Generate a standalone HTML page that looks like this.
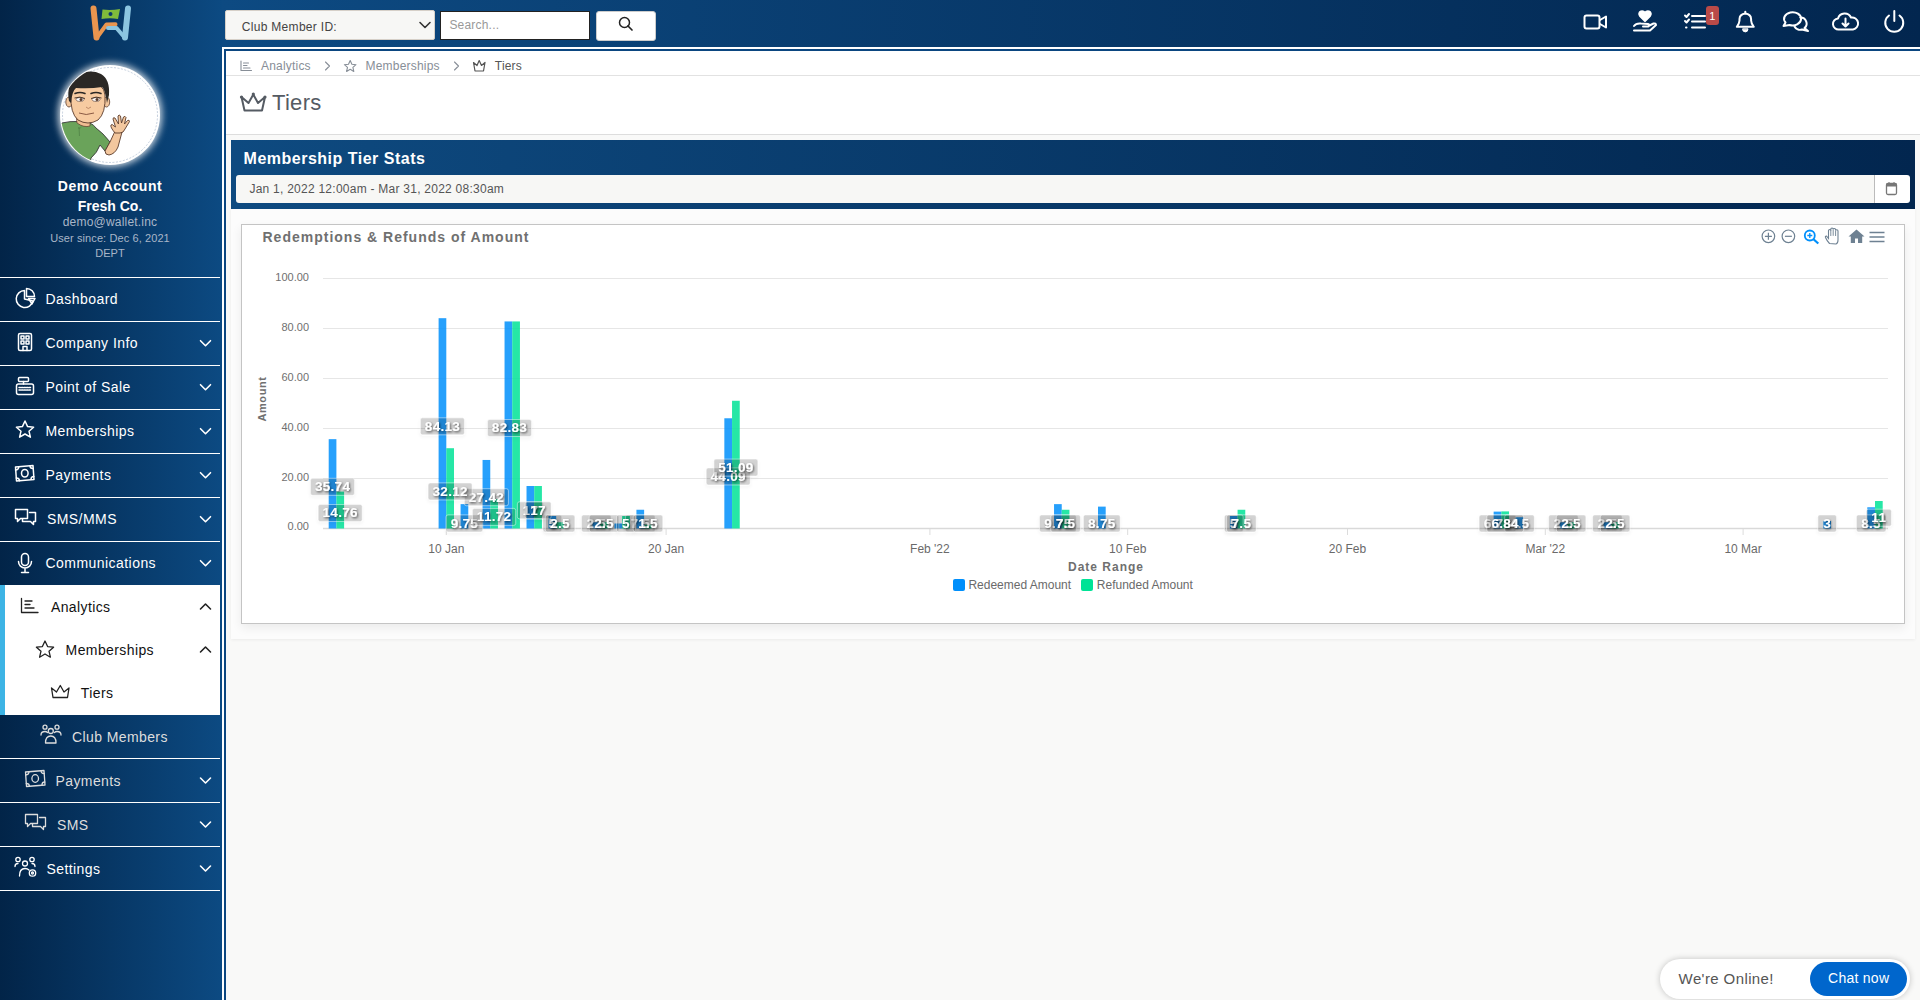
<!DOCTYPE html><html><head><meta charset="utf-8"><style>
*{margin:0;padding:0;box-sizing:border-box}
html,body{width:1920px;height:1000px;overflow:hidden}
body{background:#f9f9f8;font-family:"Liberation Sans", sans-serif;position:relative}
.t{position:absolute;white-space:nowrap}
.a{position:absolute}
svg{position:absolute;overflow:visible}
</style></head><body>
<div class="a" style="left:0;top:0;width:222px;height:1000px;background:linear-gradient(to right,#022448,#0c4a82)"></div><div class="a" style="left:222px;top:0;width:1698px;height:47px;background:linear-gradient(to right,#0d4a82,#02264f)"></div><div class="a" style="left:222px;top:47px;width:1698px;height:2px;background:#fff"></div><div class="a" style="left:222px;top:47px;width:2px;height:953px;background:#fff"></div><div class="a" style="left:224px;top:49px;width:1696px;height:2px;background:#0b4680"></div><div class="a" style="left:224px;top:49px;width:2px;height:951px;background:#0b4680"></div><svg style="left:0;top:0" width="222" height="50" viewBox="0 0 222 50">
<path d="M115.5 24.2 L106.5 24.5 L97 37.5" fill="none" stroke="#e9954f" stroke-width="4" stroke-linecap="round" stroke-linejoin="round"/>
<path d="M93.5 8.5 L96.5 37.5" fill="none" stroke="#e9954f" stroke-width="6" stroke-linecap="round"/>
<path d="M108 28 L116.5 28 L125 38" fill="none" stroke="#8cc5e0" stroke-width="4" stroke-linecap="round" stroke-linejoin="round"/>
<path d="M128 8.5 L125 37.5" fill="none" stroke="#8cc5e0" stroke-width="6" stroke-linecap="round"/>
<path d="M102.5 9.5 Q111 10.5 120 9 L118 19 Q110 17.5 101.5 19 Z" fill="#7fbb3b"/>
<circle cx="110.5" cy="14" r="2" fill="#0b3a6b"/>
</svg><div class="a" style="left:60px;top:65px;width:100px;height:100px;border-radius:50%;background:#fff;box-shadow:0 0 7px 2px rgba(255,255,255,.8)"></div>
<svg style="left:60px;top:65px" width="100" height="100" viewBox="0 0 100 100">
<defs><clipPath id="av"><circle cx="50" cy="50" r="49"/></clipPath></defs>
<circle cx="50" cy="50" r="47.5" fill="none" stroke="#9fb0c8" stroke-width=".6" stroke-dasharray="2 1.5"/>
<g clip-path="url(#av)">
<path d="M2 58 Q10 56 18 56.5 L30 58 Q34 60 36 63 Q43 68 50 77 L45 86 L40 80 Q37 88 31 93 L28 110 L0 110 L0 60 Z" fill="#6aa35a" stroke="#3a3a3a" stroke-width=".9" stroke-linejoin="round"/>
<path d="M19 62 L19.5 71 M18 63 Q20 64 21.5 62" stroke="#4f7f45" stroke-width=".7" fill="none"/>
<path d="M45 86 Q45 90 49 90 Q55 89 58 82 L62 67 L56 64 L50 77 Z" fill="#f3c79e" stroke="#5a3b2b" stroke-width=".9" stroke-linejoin="round"/>
<path d="M55 68 Q50 62 51 60 Q52 58.5 54 61 L55.5 62 L53 54 Q53 52 55 53 L58.5 59 L58 51 Q59 49 60.5 51 L61.5 58 L63.5 52 Q65 50.5 66 52.5 L64.5 59 L67.5 55.5 Q69.5 54.5 69.5 56.5 L65 64 Q63.5 68 60 68 Z" fill="#f3c79e" stroke="#5a3b2b" stroke-width=".9" stroke-linejoin="round"/>
<path d="M16 50 Q19 54 23 55 L30 55 L30 61 Q24 63 17 58 Z" fill="#f0bd92" stroke="#5a3b2b" stroke-width=".7"/>
<ellipse cx="9" cy="37" rx="3.2" ry="5" fill="#f3c79e" stroke="#5a3b2b" stroke-width=".8"/>
<ellipse cx="46.5" cy="37" rx="3.2" ry="5" fill="#f3c79e" stroke="#5a3b2b" stroke-width=".8"/>
<path d="M11 30 Q10 48 18 55 Q28 61 38 55 Q46 48 45 30 Q44 18 28 17 Q12 18 11 30 Z" fill="#f7cba1" stroke="#5a3b2b" stroke-width=".9"/>
<path d="M9 36 Q6 20 16 12 Q28 3 41 9 Q50 14 49 30 L47 38 Q45 24 42 22 Q30 24 16 23 Q12 26 11 38 Z" fill="#2b2825"/>
<path d="M15 28.5 Q20 26.5 25 28.5 M31 28.5 Q36 26.5 41 28.5" stroke="#2b2825" stroke-width="1.6" fill="none" stroke-linecap="round"/>
<ellipse cx="20" cy="34.5" rx="4" ry="2" fill="#fff" stroke="#5a3b2b" stroke-width=".6"/>
<ellipse cx="36" cy="34.5" rx="4" ry="2" fill="#fff" stroke="#5a3b2b" stroke-width=".6"/>
<circle cx="21" cy="34.5" r="1.5" fill="#5a3b2b"/><circle cx="37" cy="34.5" r="1.5" fill="#5a3b2b"/>
<path d="M14.5 33 Q20 31 25 33.5 M31 33.5 Q36 31 41.5 33" stroke="#3a2b22" stroke-width=".9" fill="none"/>
<path d="M26 42 Q28 45 31 42" stroke="#b07a5a" stroke-width=".8" fill="none"/>
<path d="M19 48 Q26 51 34 48" stroke="#8a5a44" stroke-width="1" fill="none"/>
</g></svg><div class="t" style="left:-290.0px;width:800px;text-align:center;top:178.6px;font-size:14px;line-height:14px;color:#fff;font-weight:bold;letter-spacing:0.5px;">Demo Account</div>
<div class="t" style="left:-290.0px;width:800px;text-align:center;top:198.7px;font-size:14px;line-height:14px;color:#fff;font-weight:bold;letter-spacing:0px;">Fresh Co.</div>
<div class="t" style="left:-290.0px;width:800px;text-align:center;top:216.1px;font-size:12px;line-height:12px;color:#a9b6c8;font-weight:normal;letter-spacing:0.2px;">demo@wallet.inc</div>
<div class="t" style="left:-290.0px;width:800px;text-align:center;top:233.3px;font-size:11px;line-height:11px;color:#a9b6c8;font-weight:normal;letter-spacing:0.1px;">User since: Dec 6, 2021</div>
<div class="t" style="left:-290.0px;width:800px;text-align:center;top:248.4px;font-size:11px;line-height:11px;color:#a9b6c8;font-weight:normal;letter-spacing:0px;">DEPT</div>
<div class="a" style="left:0;top:277px;width:220px;height:1.2px;background:#fff"></div><div class="a" style="left:0;top:321px;width:220px;height:1.2px;background:#fff"></div><div class="a" style="left:0;top:365px;width:220px;height:1.2px;background:#fff"></div><div class="a" style="left:0;top:409px;width:220px;height:1.2px;background:#fff"></div><div class="a" style="left:0;top:453px;width:220px;height:1.2px;background:#fff"></div><div class="a" style="left:0;top:497px;width:220px;height:1.2px;background:#fff"></div><div class="a" style="left:0;top:541px;width:220px;height:1.2px;background:#fff"></div><div class="a" style="left:0;top:758px;width:220px;height:1.2px;background:#fff"></div><div class="a" style="left:0;top:802px;width:220px;height:1.2px;background:#fff"></div><div class="a" style="left:0;top:846px;width:220px;height:1.2px;background:#fff"></div><div class="a" style="left:0;top:890px;width:220px;height:1.2px;background:#fff"></div><div class="a" style="left:0;top:585px;width:220px;height:130px;background:#fff"></div><div class="a" style="left:0;top:585px;width:5px;height:130px;background:#3db4e5"></div><div class="t" style="left:45.5px;top:292.3px;font-size:14px;line-height:14px;color:#fff;font-weight:normal;letter-spacing:0.45px;">Dashboard</div>
<div class="t" style="left:45.5px;top:336.3px;font-size:14px;line-height:14px;color:#fff;font-weight:normal;letter-spacing:0.45px;">Company Info</div>
<svg style="left:0;top:0" width="1" height="1"><path d="M200.5 340.7 L205.5 345.7 L210.5 340.7" stroke="#fff" stroke-width="1.6" fill="none" stroke-linecap="round" stroke-linejoin="round"/></svg><div class="t" style="left:45.5px;top:380.3px;font-size:14px;line-height:14px;color:#fff;font-weight:normal;letter-spacing:0.45px;">Point of Sale</div>
<svg style="left:0;top:0" width="1" height="1"><path d="M200.5 384.7 L205.5 389.7 L210.5 384.7" stroke="#fff" stroke-width="1.6" fill="none" stroke-linecap="round" stroke-linejoin="round"/></svg><div class="t" style="left:45.5px;top:424.3px;font-size:14px;line-height:14px;color:#fff;font-weight:normal;letter-spacing:0.45px;">Memberships</div>
<svg style="left:0;top:0" width="1" height="1"><path d="M200.5 428.7 L205.5 433.7 L210.5 428.7" stroke="#fff" stroke-width="1.6" fill="none" stroke-linecap="round" stroke-linejoin="round"/></svg><div class="t" style="left:45.5px;top:468.3px;font-size:14px;line-height:14px;color:#fff;font-weight:normal;letter-spacing:0.45px;">Payments</div>
<svg style="left:0;top:0" width="1" height="1"><path d="M200.5 472.7 L205.5 477.7 L210.5 472.7" stroke="#fff" stroke-width="1.6" fill="none" stroke-linecap="round" stroke-linejoin="round"/></svg><div class="t" style="left:46.9px;top:512.3px;font-size:14px;line-height:14px;color:#fff;font-weight:normal;letter-spacing:0.45px;">SMS/MMS</div>
<svg style="left:0;top:0" width="1" height="1"><path d="M200.5 516.7 L205.5 521.7 L210.5 516.7" stroke="#fff" stroke-width="1.6" fill="none" stroke-linecap="round" stroke-linejoin="round"/></svg><div class="t" style="left:45.5px;top:556.3px;font-size:14px;line-height:14px;color:#fff;font-weight:normal;letter-spacing:0.45px;">Communications</div>
<svg style="left:0;top:0" width="1" height="1"><path d="M200.5 560.7 L205.5 565.7 L210.5 560.7" stroke="#fff" stroke-width="1.6" fill="none" stroke-linecap="round" stroke-linejoin="round"/></svg><svg style="left:0;top:0" width="222" height="1000" viewBox="0 0 222 1000">
<g fill="none" stroke="#fff" stroke-width="1.5" stroke-linecap="round" stroke-linejoin="round">
<!-- dashboard pie -->
<path d="M24.5 290.5 A8.5 8.5 0 1 0 33 301 L24.5 299 Z"/>
<path d="M26.5 288.5 A8 8 0 0 1 34.5 296.5 L26.5 296.5 Z"/>
<path d="M28.5 298.5 L35 298.5 L32 304 Z"/>
<!-- company building -->
<rect x="18.5" y="333.5" width="13" height="17" rx="1.5"/>
<rect x="21" y="336" width="3" height="3"/><rect x="26" y="336" width="3" height="3"/>
<rect x="21" y="341" width="3" height="3"/><rect x="26" y="341" width="3" height="3"/>
<path d="M23 350.5 L23 346.5 L27 346.5 L27 350.5"/>
<!-- POS register -->
<rect x="18.5" y="377.5" width="10" height="4" rx="1"/>
<path d="M23.5 381.5 L23.5 384"/>
<rect x="16.5" y="384" width="17" height="10.5" rx="2"/>
<path d="M19 387.5 h12 M19 390 h12" stroke-dasharray="1.5 1"/>
<!-- star -->
<path d="M25 421 L27.6 426.6 L33.6 427.2 L29 431.2 L30.4 437.2 L25 434 L19.6 437.2 L21 431.2 L16.4 427.2 L22.4 426.6 Z"/>
<!-- payments bill -->
<path d="M15.5 467 L33 465.5 L34 479.5 L16.5 481 Z"/>
<ellipse cx="24.8" cy="473.2" rx="3.3" ry="3.8"/>
<path d="M15.5 470 Q18.5 470 18.8 467 M33.2 468.5 Q30.2 468.7 30 466 M16.3 478 Q19.3 478 19.5 480.8 M33.8 476.5 Q31 476.5 31 479.3"/>
<!-- sms bubbles -->
<path d="M15.5 509.5 h12 v9 h-7 l-3 3 v-3 h-2 Z"/>
<path d="M29.5 512.5 h6 v9 h-2 v3 l-3 -3 h-8 v-2.5"/>
<!-- mic -->
<rect x="21.5" y="553.5" width="7" height="12" rx="3.5"/>
<path d="M18.5 561.5 A6.5 6.5 0 0 0 31.5 561.5 M25 568 L25 572.5 M21.5 572.5 h7"/>
</g>
<g fill="none" stroke="#222" stroke-width="1.3" stroke-linecap="round" stroke-linejoin="round">
<!-- analytics -->
<path d="M21.5 598.5 L21.5 612.5 L38 612.5 M25 601 h7 M25 604.5 h5 M25 608 h9"/>
<!-- star -->
<path d="M45 641 L47.6 646.6 L53.6 647.2 L49 651.2 L50.4 657.2 L45 654 L39.6 657.2 L41 651.2 L36.4 647.2 L42.4 646.6 Z"/>
<!-- crown -->
<path d="M53 697.5 L51.5 688 L56.5 692 L60.3 685.5 L64 692 L69 688 L67.5 697.5 Z"/>
</g>
<g fill="none" stroke="#ddd" stroke-width="1.3" stroke-linecap="round" stroke-linejoin="round">
<!-- club members -->
<circle cx="50.8" cy="731" r="2.5"/><circle cx="45" cy="727.2" r="2"/><circle cx="57" cy="727.2" r="2"/>
<path d="M45.5 743 Q45.5 736 50.8 736 Q56 736 56 743 Z M41 735 Q41 731.5 45 731.5 Q46.5 731.5 47.5 732.5 M61 735 Q61 731.5 57 731.5 Q55.5 731.5 54.5 732.5"/>
<!-- payments bill -->
<path d="M25.5 772 L44 770.5 L45 785 L26.5 786.5 Z"/>
<ellipse cx="35.2" cy="778.5" rx="3.3" ry="3.8"/>
<path d="M25.7 775 Q28.7 775 29 772 M44.2 773.5 Q41.2 773.7 41 771 M26.3 783.5 Q29.3 783.5 29.5 786.3 M44.8 782 Q42 782 42 784.8"/>
<!-- sms bubbles -->
<path d="M25.5 814.5 h12 v9 h-7 l-3 3 v-3 h-2 Z"/>
<path d="M39.5 817.5 h6 v9 h-2 v3 l-3 -3 h-8 v-2.5"/>
</g>
<g fill="none" stroke="#fff" stroke-width="1.3" stroke-linecap="round" stroke-linejoin="round">
<!-- settings users gear -->
<circle cx="18" cy="859.5" r="2.2"/><circle cx="32" cy="859.5" r="2.2"/><circle cx="25" cy="863.5" r="2.5"/>
<path d="M15 866.5 Q15 863.5 18 863.5 M35 866.5 Q35 863.5 32 863.5 M19.5 876 Q19.5 868.5 25 868.5 Q27.5 868.5 29 870"/>
<circle cx="32.5" cy="873" r="3.2"/><circle cx="32.5" cy="873" r="1"/>
</g>
</svg><div class="t" style="left:50.9px;top:600.0px;font-size:14px;line-height:14px;color:#111;font-weight:normal;letter-spacing:0.4px;">Analytics</div>
<svg style="left:0;top:0" width="1" height="1"><path d="M200.5 609 L205.5 604 L210.5 609" stroke="#222" stroke-width="1.6" fill="none" stroke-linecap="round" stroke-linejoin="round"/></svg><div class="t" style="left:65.6px;top:642.9px;font-size:14px;line-height:14px;color:#111;font-weight:normal;letter-spacing:0.4px;">Memberships</div>
<svg style="left:0;top:0" width="1" height="1"><path d="M200.5 652 L205.5 647 L210.5 652" stroke="#222" stroke-width="1.6" fill="none" stroke-linecap="round" stroke-linejoin="round"/></svg><div class="t" style="left:80.8px;top:685.8px;font-size:14px;line-height:14px;color:#111;font-weight:normal;letter-spacing:0.4px;">Tiers</div>
<div class="t" style="left:72.0px;top:729.5px;font-size:14px;line-height:14px;color:#ddd;font-weight:normal;letter-spacing:0.4px;">Club Members</div>
<div class="t" style="left:55.5px;top:773.6px;font-size:14px;line-height:14px;color:#ddd;font-weight:normal;letter-spacing:0.4px;">Payments</div>
<svg style="left:0;top:0" width="1" height="1"><path d="M200.5 778 L205.5 783 L210.5 778" stroke="#fff" stroke-width="1.6" fill="none" stroke-linecap="round" stroke-linejoin="round"/></svg><div class="t" style="left:57.0px;top:817.5px;font-size:14px;line-height:14px;color:#ddd;font-weight:normal;letter-spacing:0.4px;">SMS</div>
<svg style="left:0;top:0" width="1" height="1"><path d="M200.5 822 L205.5 827 L210.5 822" stroke="#fff" stroke-width="1.6" fill="none" stroke-linecap="round" stroke-linejoin="round"/></svg><div class="t" style="left:46.6px;top:861.6px;font-size:14px;line-height:14px;color:#fff;font-weight:normal;letter-spacing:0.4px;">Settings</div>
<svg style="left:0;top:0" width="1" height="1"><path d="M200.5 866 L205.5 871 L210.5 866" stroke="#fff" stroke-width="1.6" fill="none" stroke-linecap="round" stroke-linejoin="round"/></svg><div class="a" style="left:225px;top:10px;width:210px;height:29.5px;background:#f7f7f5;border:1px solid #d6d0c8;border-radius:2px"></div><div class="t" style="left:241.8px;top:20.7px;font-size:12px;line-height:12px;color:#444;font-weight:normal;letter-spacing:0.3px;">Club Member ID:</div>
<svg style="left:0;top:0" width="1" height="1"><path d="M420 22.5 L425 27.5 L430 22.5" stroke="#333" stroke-width="1.6" fill="none" stroke-linecap="round" stroke-linejoin="round"/></svg><div class="a" style="left:440px;top:10.5px;width:150px;height:29.5px;background:#fff;border:1px solid #222"></div><div class="t" style="left:449.4px;top:19.2px;font-size:12px;line-height:12px;color:#999;font-weight:normal;letter-spacing:0.2px;">Search...</div>
<div class="a" style="left:596px;top:10.5px;width:60px;height:30px;background:#fff;border:1px solid #ccc;border-radius:3px"></div><svg style="left:0;top:0" width="1" height="1"><circle cx="624.5" cy="22.5" r="5" fill="none" stroke="#222" stroke-width="1.5"/><path d="M628 26 L632 30" stroke="#222" stroke-width="1.7" stroke-linecap="round"/></svg><svg style="left:0;top:0" width="1" height="1"><g fill="none" stroke="#fff" stroke-width="2" stroke-linecap="round" stroke-linejoin="round">
<rect x="1584.5" y="15.5" width="15" height="13" rx="2"/><path d="M1600 20 L1606 16.5 L1606 27.5 L1600 24"/>
<path d="M1645 21 L1640 16 Q1638 13 1641 11.5 Q1643.5 10.8 1645 13 Q1646.5 10.8 1649 11.5 Q1652 13 1650 16 Z" fill="#fff"/>
<path d="M1634 26 Q1636 23 1641 23.5 L1648 24 Q1650 24.5 1648.5 26.5 L1643 26.5 M1648.5 26 L1653.5 23.5 Q1656 23 1656 25 L1650 30.5 L1634 30.5"/>
<path d="M1685 15.5 L1686.5 17 L1689 14 M1685 21 L1686.5 22.5 L1689 19.5 M1692 16 L1705 16 M1692 21.5 L1705 21.5 M1692 27.5 L1705 27.5 M1686 27.5 L1686.5 27.5"/>
<path d="M1736.8 26.8 L1753.8 26.8 Q1751.3 24 1751.1 20.5 L1751.1 19 Q1750.9 14.3 1745.3 13.6 Q1739.7 14.3 1739.5 19 L1739.5 20.5 Q1739.3 24 1736.8 26.8 Z"/><path d="M1745.3 11.8 L1745.3 13"/><path d="M1742.6 29.2 A2.7 2.7 0 0 0 1748 29.2 Z" fill="#fff" stroke-width="1"/>
<path d="M1789.5 25 A8.5 6.6 0 1 0 1785.5 22.5 L1783.5 26 Z"/>
<path d="M1800.2 17.5 A6.2 6 0 0 1 1804.5 28 L1808 31 L1802 29.5 A6.2 6 0 0 1 1794.5 26.5"/>
<path d="M1839 29.5 A5.5 5.5 0 0 1 1838 18.5 A7 7 0 0 1 1851 17.5 A5.5 5.5 0 0 1 1853 29.5 Z"/><path d="M1845.5 18.5 L1845.5 26.5 M1842.5 23.5 L1845.5 26.5 L1848.5 23.5"/>
<path d="M1889 15.5 A9 9 0 1 0 1899.5 15.5"/><path d="M1894.3 11 L1894.3 21"/>
</g></svg><div class="a" style="left:1705.5px;top:5.5px;width:13.5px;height:19.5px;background:#b94a48;border-radius:3px"></div><div class="t" style="left:1312.2px;width:800px;text-align:center;top:10.7px;font-size:11px;line-height:11px;color:#fff;font-weight:normal;letter-spacing:0px;">1</div>
<div class="a" style="left:226px;top:51px;width:1694px;height:84px;background:#fff;border-bottom:1px solid #ddd"></div><div class="a" style="left:226px;top:75px;width:1694px;height:1px;background:#e2e2e2"></div><svg style="left:0;top:0" width="1" height="1"><g fill="none" stroke="#878e97" stroke-width="1.1" stroke-linecap="round" stroke-linejoin="round">
<path d="M241 61 L241 70.5 L251.5 70.5 M243.5 63 h5 M243.5 65.5 h3.5 M243.5 68 h6.5"/>
<path d="M350.2 60.5 L351.9 64.3 L356 64.7 L352.9 67.4 L353.8 71.4 L350.2 69.3 L346.6 71.4 L347.5 67.4 L344.4 64.7 L348.5 64.3 Z"/>
<path d="M325.5 62 L329.5 66 L325.5 70 M454.5 62 L458.5 66 L454.5 70"/>
</g><g fill="none" stroke="#555" stroke-width="1.2" stroke-linejoin="round">
<path d="M475 71 L473.5 62.5 L477 65.5 L479.2 60.5 L481.5 65.5 L485 62.5 L483.5 71 Z"/>
</g></svg><div class="t" style="left:261.0px;top:60.1px;font-size:12px;line-height:12px;color:#878e97;font-weight:normal;letter-spacing:0.2px;">Analytics</div>
<div class="t" style="left:365.5px;top:60.1px;font-size:12px;line-height:12px;color:#878e97;font-weight:normal;letter-spacing:0.2px;">Memberships</div>
<div class="t" style="left:494.8px;top:60.1px;font-size:12px;line-height:12px;color:#555;font-weight:normal;letter-spacing:0.2px;">Tiers</div>
<svg style="left:0;top:0" width="1" height="1"><g fill="none" stroke="#555b63" stroke-width="2" stroke-linejoin="round">
<path d="M244.5 110.5 L241.5 97 L248.5 103 L253.3 94.5 L258 103 L265 97 L262 110.5 Z"/>
</g><g fill="#555b63"><circle cx="241.5" cy="97" r="1.6"/><circle cx="253.3" cy="94" r="1.6"/><circle cx="265" cy="97" r="1.6"/></g></svg><div class="t" style="left:272.0px;top:92.4px;font-size:22px;line-height:22px;color:#555b63;font-weight:normal;letter-spacing:0.3px;">Tiers</div>
<div class="a" style="left:231px;top:208px;width:1684px;height:431px;background:#fcfcfc;box-shadow:0 1px 3px rgba(0,0,0,.06)"></div><div class="a" style="left:231px;top:140px;width:1684px;height:68.5px;background:linear-gradient(to right,#0e4a80,#02264f)"></div><div class="t" style="left:243.6px;top:150.5px;font-size:16px;line-height:16px;color:#fff;font-weight:bold;letter-spacing:0.5px;">Membership Tier Stats</div>
<div class="a" style="left:236px;top:174.5px;width:1638px;height:28.5px;background:#f7f7f5;border-radius:3px 0 0 3px"></div><div class="a" style="left:1873.5px;top:174.5px;width:36px;height:28.5px;background:#fff;border-left:1px solid #bbb;border-radius:0 3px 3px 0"></div><svg style="left:0;top:0" width="1" height="1"><rect x="1886.5" y="183.5" width="10" height="11" rx="1.5" fill="#fff" stroke="#777" stroke-width="1.3"/><rect x="1886.5" y="183.5" width="10" height="3" fill="#777"/><path d="M1889 182 v2.5 M1894 182 v2.5" stroke="#777" stroke-width="1"/></svg><div class="t" style="left:249.4px;top:182.8px;font-size:12px;line-height:12px;color:#555;font-weight:normal;letter-spacing:0.25px;">Jan 1, 2022 12:00am - Mar 31, 2022 08:30am</div>
<div class="a" style="left:241px;top:224px;width:1664px;height:400px;background:#fff;border:1px solid #c4c4c4;box-shadow:0 4px 10px rgba(0,0,0,.07)"></div><svg style="left:0;top:0" width="1920" height="1000" viewBox="0 0 1920 1000"><defs><filter id="ds" x="-20%" y="-20%" width="140%" height="140%"><feDropShadow dx="1" dy="1.2" stdDeviation="0.8" flood-color="#000" flood-opacity="0.6"/></filter><filter id="bs" x="-30%" y="-30%" width="160%" height="180%"><feDropShadow dx="0" dy="2" stdDeviation="1.5" flood-color="#000" flood-opacity="0.12"/></filter></defs><text x="262.5" y="242" font-family="Liberation Sans" font-weight="bold" font-size="14" letter-spacing="1" fill="#707070">Redemptions &amp; Refunds of Amount</text><line x1="323" y1="278.5" x2="1888" y2="278.5" stroke="#e6e6e6" stroke-width="1"/><line x1="323" y1="328.5" x2="1888" y2="328.5" stroke="#e6e6e6" stroke-width="1"/><line x1="323" y1="378.5" x2="1888" y2="378.5" stroke="#e6e6e6" stroke-width="1"/><line x1="323" y1="428.5" x2="1888" y2="428.5" stroke="#e6e6e6" stroke-width="1"/><line x1="323" y1="478.5" x2="1888" y2="478.5" stroke="#e6e6e6" stroke-width="1"/><line x1="323" y1="528.5" x2="1888" y2="528.5" stroke="#d9d9d9" stroke-width="1.5"/><text x="309" y="281" text-anchor="end" font-family="Liberation Sans" font-size="11" fill="#6f6f6f">100.00</text><text x="309" y="330.5" text-anchor="end" font-family="Liberation Sans" font-size="11" fill="#6f6f6f">80.00</text><text x="309" y="380.5" text-anchor="end" font-family="Liberation Sans" font-size="11" fill="#6f6f6f">60.00</text><text x="309" y="430.5" text-anchor="end" font-family="Liberation Sans" font-size="11" fill="#6f6f6f">40.00</text><text x="309" y="480.5" text-anchor="end" font-family="Liberation Sans" font-size="11" fill="#6f6f6f">20.00</text><text x="309" y="530" text-anchor="end" font-family="Liberation Sans" font-size="11" fill="#6f6f6f">0.00</text><text transform="translate(266 399) rotate(-90)" text-anchor="middle" font-family="Liberation Sans" font-weight="bold" font-size="11" letter-spacing="0.6" fill="#707070">Amount</text><line x1="446.3" y1="529" x2="446.3" y2="535" stroke="#dcdcdc" stroke-width="1"/><text x="446.3" y="553" text-anchor="middle" font-family="Liberation Sans" font-size="12" fill="#6a6a6a">10 Jan</text><line x1="666.1" y1="529" x2="666.1" y2="535" stroke="#dcdcdc" stroke-width="1"/><text x="666.1" y="553" text-anchor="middle" font-family="Liberation Sans" font-size="12" fill="#6a6a6a">20 Jan</text><line x1="929.9" y1="529" x2="929.9" y2="535" stroke="#dcdcdc" stroke-width="1"/><text x="929.9" y="553" text-anchor="middle" font-family="Liberation Sans" font-size="12" fill="#6a6a6a">Feb '22</text><line x1="1127.7" y1="529" x2="1127.7" y2="535" stroke="#dcdcdc" stroke-width="1"/><text x="1127.7" y="553" text-anchor="middle" font-family="Liberation Sans" font-size="12" fill="#6a6a6a">10 Feb</text><line x1="1347.5" y1="529" x2="1347.5" y2="535" stroke="#dcdcdc" stroke-width="1"/><text x="1347.5" y="553" text-anchor="middle" font-family="Liberation Sans" font-size="12" fill="#6a6a6a">20 Feb</text><line x1="1545.3" y1="529" x2="1545.3" y2="535" stroke="#dcdcdc" stroke-width="1"/><text x="1545.3" y="553" text-anchor="middle" font-family="Liberation Sans" font-size="12" fill="#6a6a6a">Mar '22</text><line x1="1743.1" y1="529" x2="1743.1" y2="535" stroke="#dcdcdc" stroke-width="1"/><text x="1743.1" y="553" text-anchor="middle" font-family="Liberation Sans" font-size="12" fill="#6a6a6a">10 Mar</text><text x="1106" y="571" text-anchor="middle" font-family="Liberation Sans" font-weight="bold" font-size="12" letter-spacing="1" fill="#6f6f6f">Date Range</text><rect x="953" y="579" width="12" height="12" rx="2" fill="#008ffb"/><text x="968.4" y="588.7" font-family="Liberation Sans" font-size="12" fill="#6a6a6a">Redeemed Amount</text><rect x="1081" y="579" width="12" height="12" rx="2" fill="#00e396"/><text x="1096.8" y="588.7" font-family="Liberation Sans" font-size="12" fill="#6a6a6a">Refunded Amount</text><rect x="328.70" y="439.15" width="7.7" height="89.35" fill="#008ffb" fill-opacity="0.85"/><rect x="438.60" y="318.18" width="7.7" height="210.32" fill="#008ffb" fill-opacity="0.85"/><rect x="460.58" y="504.12" width="7.7" height="24.38" fill="#008ffb" fill-opacity="0.85"/><rect x="482.56" y="459.95" width="7.7" height="68.55" fill="#008ffb" fill-opacity="0.85"/><rect x="504.54" y="321.43" width="7.7" height="207.07" fill="#008ffb" fill-opacity="0.85"/><rect x="526.52" y="486.00" width="7.7" height="42.50" fill="#008ffb" fill-opacity="0.85"/><rect x="548.50" y="516.00" width="7.7" height="12.50" fill="#008ffb" fill-opacity="0.85"/><rect x="592.46" y="522.25" width="7.7" height="6.25" fill="#008ffb" fill-opacity="0.85"/><rect x="614.44" y="523.50" width="7.7" height="5.00" fill="#008ffb" fill-opacity="0.85"/><rect x="636.42" y="509.75" width="7.7" height="18.75" fill="#008ffb" fill-opacity="0.85"/><rect x="724.34" y="418.27" width="7.7" height="110.23" fill="#008ffb" fill-opacity="0.85"/><rect x="1054.04" y="504.12" width="7.7" height="24.38" fill="#008ffb" fill-opacity="0.85"/><rect x="1098.00" y="506.62" width="7.7" height="21.88" fill="#008ffb" fill-opacity="0.85"/><rect x="1229.88" y="516.00" width="7.7" height="12.50" fill="#008ffb" fill-opacity="0.85"/><rect x="1493.64" y="511.62" width="7.7" height="16.88" fill="#008ffb" fill-opacity="0.85"/><rect x="1515.62" y="517.25" width="7.7" height="11.25" fill="#008ffb" fill-opacity="0.85"/><rect x="1559.58" y="522.25" width="7.7" height="6.25" fill="#008ffb" fill-opacity="0.85"/><rect x="1603.54" y="522.25" width="7.7" height="6.25" fill="#008ffb" fill-opacity="0.85"/><rect x="1823.34" y="521.00" width="7.7" height="7.50" fill="#008ffb" fill-opacity="0.85"/><rect x="1867.30" y="507.25" width="7.7" height="21.25" fill="#008ffb" fill-opacity="0.85"/><rect x="336.40" y="491.60" width="7.7" height="36.90" fill="#00e396" fill-opacity="0.85"/><rect x="446.30" y="448.20" width="7.7" height="80.30" fill="#00e396" fill-opacity="0.85"/><rect x="490.26" y="499.20" width="7.7" height="29.30" fill="#00e396" fill-opacity="0.85"/><rect x="512.24" y="321.43" width="7.7" height="207.07" fill="#00e396" fill-opacity="0.85"/><rect x="534.22" y="486.00" width="7.7" height="42.50" fill="#00e396" fill-opacity="0.85"/><rect x="556.20" y="522.25" width="7.7" height="6.25" fill="#00e396" fill-opacity="0.85"/><rect x="600.16" y="522.25" width="7.7" height="6.25" fill="#00e396" fill-opacity="0.85"/><rect x="622.14" y="516.00" width="7.7" height="12.50" fill="#00e396" fill-opacity="0.85"/><rect x="644.12" y="524.75" width="7.7" height="3.75" fill="#00e396" fill-opacity="0.85"/><rect x="732.04" y="400.77" width="7.7" height="127.73" fill="#00e396" fill-opacity="0.85"/><rect x="1061.74" y="509.75" width="7.7" height="18.75" fill="#00e396" fill-opacity="0.85"/><rect x="1237.58" y="509.75" width="7.7" height="18.75" fill="#00e396" fill-opacity="0.85"/><rect x="1501.34" y="511.40" width="7.7" height="17.10" fill="#00e396" fill-opacity="0.85"/><rect x="1567.28" y="522.25" width="7.7" height="6.25" fill="#00e396" fill-opacity="0.85"/><rect x="1611.24" y="522.25" width="7.7" height="6.25" fill="#00e396" fill-opacity="0.85"/><rect x="1875.00" y="501.00" width="7.7" height="27.50" fill="#00e396" fill-opacity="0.85"/><rect x="310.5" y="478.3" width="44.0" height="17" rx="2" fill="rgba(0,0,0,0.155)" stroke="rgba(255,255,255,0.45)" stroke-width="1" filter="url(#bs)"/><text x="332.6" y="491.1" text-anchor="middle" font-family="Liberation Sans" font-weight="bold" font-size="13.5" letter-spacing="0.3" fill="#fff" filter="url(#ds)">35.74</text><rect x="420.4" y="417.8" width="44.0" height="17" rx="2" fill="rgba(0,0,0,0.155)" stroke="rgba(255,255,255,0.45)" stroke-width="1" filter="url(#bs)"/><text x="442.5" y="430.6" text-anchor="middle" font-family="Liberation Sans" font-weight="bold" font-size="13.5" letter-spacing="0.3" fill="#fff" filter="url(#ds)">84.13</text><rect x="446.0" y="514.9" width="36.8" height="17" rx="2" fill="rgba(0,0,0,0.155)" stroke="rgba(255,255,255,0.45)" stroke-width="1" filter="url(#bs)"/><text x="464.4" y="527.7" text-anchor="middle" font-family="Liberation Sans" font-weight="bold" font-size="13.5" letter-spacing="0.3" fill="#fff" filter="url(#ds)">9.75</text><rect x="464.4" y="488.7" width="44.0" height="17" rx="2" fill="rgba(0,0,0,0.155)" stroke="rgba(255,255,255,0.45)" stroke-width="1" filter="url(#bs)"/><text x="486.4" y="501.5" text-anchor="middle" font-family="Liberation Sans" font-weight="bold" font-size="13.5" letter-spacing="0.3" fill="#fff" filter="url(#ds)">27.42</text><rect x="517.4" y="501.8" width="26.0" height="17" rx="2" fill="rgba(0,0,0,0.155)" stroke="rgba(255,255,255,0.45)" stroke-width="1" filter="url(#bs)"/><text x="530.4" y="514.5" text-anchor="middle" font-family="Liberation Sans" font-weight="bold" font-size="13.5" letter-spacing="0.3" fill="#fff" filter="url(#ds)">17</text><rect x="543.0" y="514.9" width="18.7" height="17" rx="2" fill="rgba(0,0,0,0.155)" stroke="rgba(255,255,255,0.45)" stroke-width="1" filter="url(#bs)"/><text x="552.4" y="527.7" text-anchor="middle" font-family="Liberation Sans" font-weight="bold" font-size="13.5" letter-spacing="0.3" fill="#fff" filter="url(#ds)">5</text><rect x="581.5" y="514.9" width="29.6" height="17" rx="2" fill="rgba(0,0,0,0.155)" stroke="rgba(255,255,255,0.45)" stroke-width="1" filter="url(#bs)"/><text x="596.3" y="527.7" text-anchor="middle" font-family="Liberation Sans" font-weight="bold" font-size="13.5" letter-spacing="0.3" fill="#fff" filter="url(#ds)">2.5</text><rect x="625.5" y="514.9" width="29.6" height="17" rx="2" fill="rgba(0,0,0,0.155)" stroke="rgba(255,255,255,0.45)" stroke-width="1" filter="url(#bs)"/><text x="640.3" y="527.7" text-anchor="middle" font-family="Liberation Sans" font-weight="bold" font-size="13.5" letter-spacing="0.3" fill="#fff" filter="url(#ds)">7.5</text><rect x="706.2" y="467.9" width="44.0" height="17" rx="2" fill="rgba(0,0,0,0.155)" stroke="rgba(255,255,255,0.45)" stroke-width="1" filter="url(#bs)"/><text x="728.2" y="480.7" text-anchor="middle" font-family="Liberation Sans" font-weight="bold" font-size="13.5" letter-spacing="0.3" fill="#fff" filter="url(#ds)">44.09</text><rect x="1039.5" y="514.9" width="36.8" height="17" rx="2" fill="rgba(0,0,0,0.155)" stroke="rgba(255,255,255,0.45)" stroke-width="1" filter="url(#bs)"/><text x="1057.9" y="527.7" text-anchor="middle" font-family="Liberation Sans" font-weight="bold" font-size="13.5" letter-spacing="0.3" fill="#fff" filter="url(#ds)">9.75</text><rect x="1083.4" y="514.9" width="36.8" height="17" rx="2" fill="rgba(0,0,0,0.155)" stroke="rgba(255,255,255,0.45)" stroke-width="1" filter="url(#bs)"/><text x="1101.8" y="527.7" text-anchor="middle" font-family="Liberation Sans" font-weight="bold" font-size="13.5" letter-spacing="0.3" fill="#fff" filter="url(#ds)">8.75</text><rect x="1224.4" y="514.9" width="18.7" height="17" rx="2" fill="rgba(0,0,0,0.155)" stroke="rgba(255,255,255,0.45)" stroke-width="1" filter="url(#bs)"/><text x="1233.7" y="527.7" text-anchor="middle" font-family="Liberation Sans" font-weight="bold" font-size="13.5" letter-spacing="0.3" fill="#fff" filter="url(#ds)">5</text><rect x="1479.1" y="514.9" width="36.8" height="17" rx="2" fill="rgba(0,0,0,0.155)" stroke="rgba(255,255,255,0.45)" stroke-width="1" filter="url(#bs)"/><text x="1497.5" y="527.7" text-anchor="middle" font-family="Liberation Sans" font-weight="bold" font-size="13.5" letter-spacing="0.3" fill="#fff" filter="url(#ds)">6.75</text><rect x="1504.7" y="514.9" width="29.6" height="17" rx="2" fill="rgba(0,0,0,0.155)" stroke="rgba(255,255,255,0.45)" stroke-width="1" filter="url(#bs)"/><text x="1519.5" y="527.7" text-anchor="middle" font-family="Liberation Sans" font-weight="bold" font-size="13.5" letter-spacing="0.3" fill="#fff" filter="url(#ds)">4.5</text><rect x="1548.6" y="514.9" width="29.6" height="17" rx="2" fill="rgba(0,0,0,0.155)" stroke="rgba(255,255,255,0.45)" stroke-width="1" filter="url(#bs)"/><text x="1563.4" y="527.7" text-anchor="middle" font-family="Liberation Sans" font-weight="bold" font-size="13.5" letter-spacing="0.3" fill="#fff" filter="url(#ds)">2.5</text><rect x="1592.6" y="514.9" width="29.6" height="17" rx="2" fill="rgba(0,0,0,0.155)" stroke="rgba(255,255,255,0.45)" stroke-width="1" filter="url(#bs)"/><text x="1607.4" y="527.7" text-anchor="middle" font-family="Liberation Sans" font-weight="bold" font-size="13.5" letter-spacing="0.3" fill="#fff" filter="url(#ds)">2.5</text><rect x="1817.8" y="514.9" width="18.7" height="17" rx="2" fill="rgba(0,0,0,0.155)" stroke="rgba(255,255,255,0.45)" stroke-width="1" filter="url(#bs)"/><text x="1827.2" y="527.7" text-anchor="middle" font-family="Liberation Sans" font-weight="bold" font-size="13.5" letter-spacing="0.3" fill="#fff" filter="url(#ds)">3</text><rect x="1856.4" y="514.9" width="29.6" height="17" rx="2" fill="rgba(0,0,0,0.155)" stroke="rgba(255,255,255,0.45)" stroke-width="1" filter="url(#bs)"/><text x="1871.1" y="527.7" text-anchor="middle" font-family="Liberation Sans" font-weight="bold" font-size="13.5" letter-spacing="0.3" fill="#fff" filter="url(#ds)">8.5</text><rect x="318.2" y="504.5" width="44.0" height="17" rx="2" fill="rgba(0,0,0,0.155)" stroke="rgba(255,255,255,0.45)" stroke-width="1" filter="url(#bs)"/><text x="340.2" y="517.3" text-anchor="middle" font-family="Liberation Sans" font-weight="bold" font-size="13.5" letter-spacing="0.3" fill="#fff" filter="url(#ds)">14.76</text><rect x="428.1" y="482.9" width="44.0" height="17" rx="2" fill="rgba(0,0,0,0.155)" stroke="rgba(255,255,255,0.45)" stroke-width="1" filter="url(#bs)"/><text x="450.2" y="495.7" text-anchor="middle" font-family="Liberation Sans" font-weight="bold" font-size="13.5" letter-spacing="0.3" fill="#fff" filter="url(#ds)">32.12</text><rect x="472.4" y="508.4" width="43.3" height="17" rx="2" fill="rgba(0,0,0,0.155)" stroke="rgba(255,255,255,0.45)" stroke-width="1" filter="url(#bs)"/><text x="494.1" y="521.1" text-anchor="middle" font-family="Liberation Sans" font-weight="bold" font-size="13.5" letter-spacing="0.3" fill="#fff" filter="url(#ds)">11.72</text><rect x="487.5" y="419.5" width="44.0" height="17" rx="2" fill="rgba(0,0,0,0.155)" stroke="rgba(255,255,255,0.45)" stroke-width="1" filter="url(#bs)"/><text x="509.5" y="432.3" text-anchor="middle" font-family="Liberation Sans" font-weight="bold" font-size="13.5" letter-spacing="0.3" fill="#fff" filter="url(#ds)">82.83</text><rect x="525.1" y="501.8" width="26.0" height="17" rx="2" fill="rgba(0,0,0,0.155)" stroke="rgba(255,255,255,0.45)" stroke-width="1" filter="url(#bs)"/><text x="538.1" y="514.5" text-anchor="middle" font-family="Liberation Sans" font-weight="bold" font-size="13.5" letter-spacing="0.3" fill="#fff" filter="url(#ds)">17</text><rect x="545.3" y="514.9" width="29.6" height="17" rx="2" fill="rgba(0,0,0,0.155)" stroke="rgba(255,255,255,0.45)" stroke-width="1" filter="url(#bs)"/><text x="560.1" y="527.7" text-anchor="middle" font-family="Liberation Sans" font-weight="bold" font-size="13.5" letter-spacing="0.3" fill="#fff" filter="url(#ds)">2.5</text><rect x="589.2" y="514.9" width="29.6" height="17" rx="2" fill="rgba(0,0,0,0.155)" stroke="rgba(255,255,255,0.45)" stroke-width="1" filter="url(#bs)"/><text x="604.0" y="527.7" text-anchor="middle" font-family="Liberation Sans" font-weight="bold" font-size="13.5" letter-spacing="0.3" fill="#fff" filter="url(#ds)">2.5</text><rect x="616.6" y="514.9" width="18.7" height="17" rx="2" fill="rgba(0,0,0,0.155)" stroke="rgba(255,255,255,0.45)" stroke-width="1" filter="url(#bs)"/><text x="626.0" y="527.7" text-anchor="middle" font-family="Liberation Sans" font-weight="bold" font-size="13.5" letter-spacing="0.3" fill="#fff" filter="url(#ds)">5</text><rect x="633.2" y="514.9" width="29.6" height="17" rx="2" fill="rgba(0,0,0,0.155)" stroke="rgba(255,255,255,0.45)" stroke-width="1" filter="url(#bs)"/><text x="648.0" y="527.7" text-anchor="middle" font-family="Liberation Sans" font-weight="bold" font-size="13.5" letter-spacing="0.3" fill="#fff" filter="url(#ds)">1.5</text><rect x="713.9" y="459.1" width="44.0" height="17" rx="2" fill="rgba(0,0,0,0.155)" stroke="rgba(255,255,255,0.45)" stroke-width="1" filter="url(#bs)"/><text x="735.9" y="471.9" text-anchor="middle" font-family="Liberation Sans" font-weight="bold" font-size="13.5" letter-spacing="0.3" fill="#fff" filter="url(#ds)">51.09</text><rect x="1050.8" y="514.9" width="29.6" height="17" rx="2" fill="rgba(0,0,0,0.155)" stroke="rgba(255,255,255,0.45)" stroke-width="1" filter="url(#bs)"/><text x="1065.6" y="527.7" text-anchor="middle" font-family="Liberation Sans" font-weight="bold" font-size="13.5" letter-spacing="0.3" fill="#fff" filter="url(#ds)">7.5</text><rect x="1226.6" y="514.9" width="29.6" height="17" rx="2" fill="rgba(0,0,0,0.155)" stroke="rgba(255,255,255,0.45)" stroke-width="1" filter="url(#bs)"/><text x="1241.4" y="527.7" text-anchor="middle" font-family="Liberation Sans" font-weight="bold" font-size="13.5" letter-spacing="0.3" fill="#fff" filter="url(#ds)">7.5</text><rect x="1486.8" y="514.9" width="36.8" height="17" rx="2" fill="rgba(0,0,0,0.155)" stroke="rgba(255,255,255,0.45)" stroke-width="1" filter="url(#bs)"/><text x="1505.2" y="527.7" text-anchor="middle" font-family="Liberation Sans" font-weight="bold" font-size="13.5" letter-spacing="0.3" fill="#fff" filter="url(#ds)">6.84</text><rect x="1556.3" y="514.9" width="29.6" height="17" rx="2" fill="rgba(0,0,0,0.155)" stroke="rgba(255,255,255,0.45)" stroke-width="1" filter="url(#bs)"/><text x="1571.1" y="527.7" text-anchor="middle" font-family="Liberation Sans" font-weight="bold" font-size="13.5" letter-spacing="0.3" fill="#fff" filter="url(#ds)">2.5</text><rect x="1600.3" y="514.9" width="29.6" height="17" rx="2" fill="rgba(0,0,0,0.155)" stroke="rgba(255,255,255,0.45)" stroke-width="1" filter="url(#bs)"/><text x="1615.1" y="527.7" text-anchor="middle" font-family="Liberation Sans" font-weight="bold" font-size="13.5" letter-spacing="0.3" fill="#fff" filter="url(#ds)">2.5</text><rect x="1866.2" y="509.2" width="25.2" height="17" rx="2" fill="rgba(0,0,0,0.155)" stroke="rgba(255,255,255,0.45)" stroke-width="1" filter="url(#bs)"/><text x="1878.8" y="522.0" text-anchor="middle" font-family="Liberation Sans" font-weight="bold" font-size="13.5" letter-spacing="0.3" fill="#fff" filter="url(#ds)">11</text><g fill="none" stroke="#6e8192" stroke-width="1.2"><circle cx="1768.4" cy="236.3" r="6.3"/><path d="M1764.9 236.3 h7 M1768.4 232.8 v7"/><circle cx="1788.4" cy="236.3" r="6.3"/><path d="M1784.9 236.3 h7"/></g><g fill="none" stroke="#008ffb" stroke-width="1.8"><circle cx="1809.8" cy="235.5" r="5"/><path d="M1813.5 239.2 L1818.3 243.5" stroke-width="2.2"/><path d="M1807.3 235.5 h5 M1809.8 233 v5" stroke-width="1.3"/></g><path d="M1829.5 243.5 Q1827 241 1825.5 237.5 Q1825 236 1826.5 236 L1828.5 238.5 L1828.5 230.5 Q1828.5 229.5 1829.7 229.5 Q1830.8 229.5 1830.8 230.5 L1830.8 229 Q1830.8 228 1832 228 Q1833.2 228 1833.2 229 L1833.2 229.3 Q1833.2 228.5 1834.4 228.5 Q1835.6 228.5 1835.6 229.5 L1835.6 230.5 Q1835.6 229.8 1836.8 229.8 Q1838 229.8 1838 231 L1838 240 Q1838 243.5 1836 244 Z" fill="#fff" stroke="#6e8192" stroke-width="1.1"/><path d="M1830.8 230 v6 M1833.2 229.3 v6.5 M1835.6 230.5 v5.5" stroke="#6e8192" stroke-width="0.9"/><path d="M1856.5 229.5 L1848.5 236.5 L1850.8 236.5 L1850.8 243 L1855 243 L1855 238.5 L1858 238.5 L1858 243 L1862.2 243 L1862.2 236.5 L1864.5 236.5 Z" fill="#6e8192"/><path d="M1869.5 232.5 h15 M1869.5 237 h15 M1869.5 241.5 h15" stroke="#6e8192" stroke-width="1.6"/></svg><div class="a" style="left:1660px;top:959px;width:250px;height:40px;background:#fff;border-radius:20px;box-shadow:0 0 6px rgba(0,0,0,.22)"></div>
<div class="a" style="left:1810px;top:962px;width:97px;height:34px;background:#0066cc;border-radius:17px"></div><div class="t" style="left:1678.6px;top:971.1px;font-size:15px;line-height:15px;color:#555;font-weight:normal;letter-spacing:0.4px;">We're Online!</div>
<div class="t" style="left:1458.7px;width:800px;text-align:center;top:971.1px;font-size:14px;line-height:14px;color:#fff;font-weight:normal;letter-spacing:0.25px;">Chat now</div>
</body></html>
